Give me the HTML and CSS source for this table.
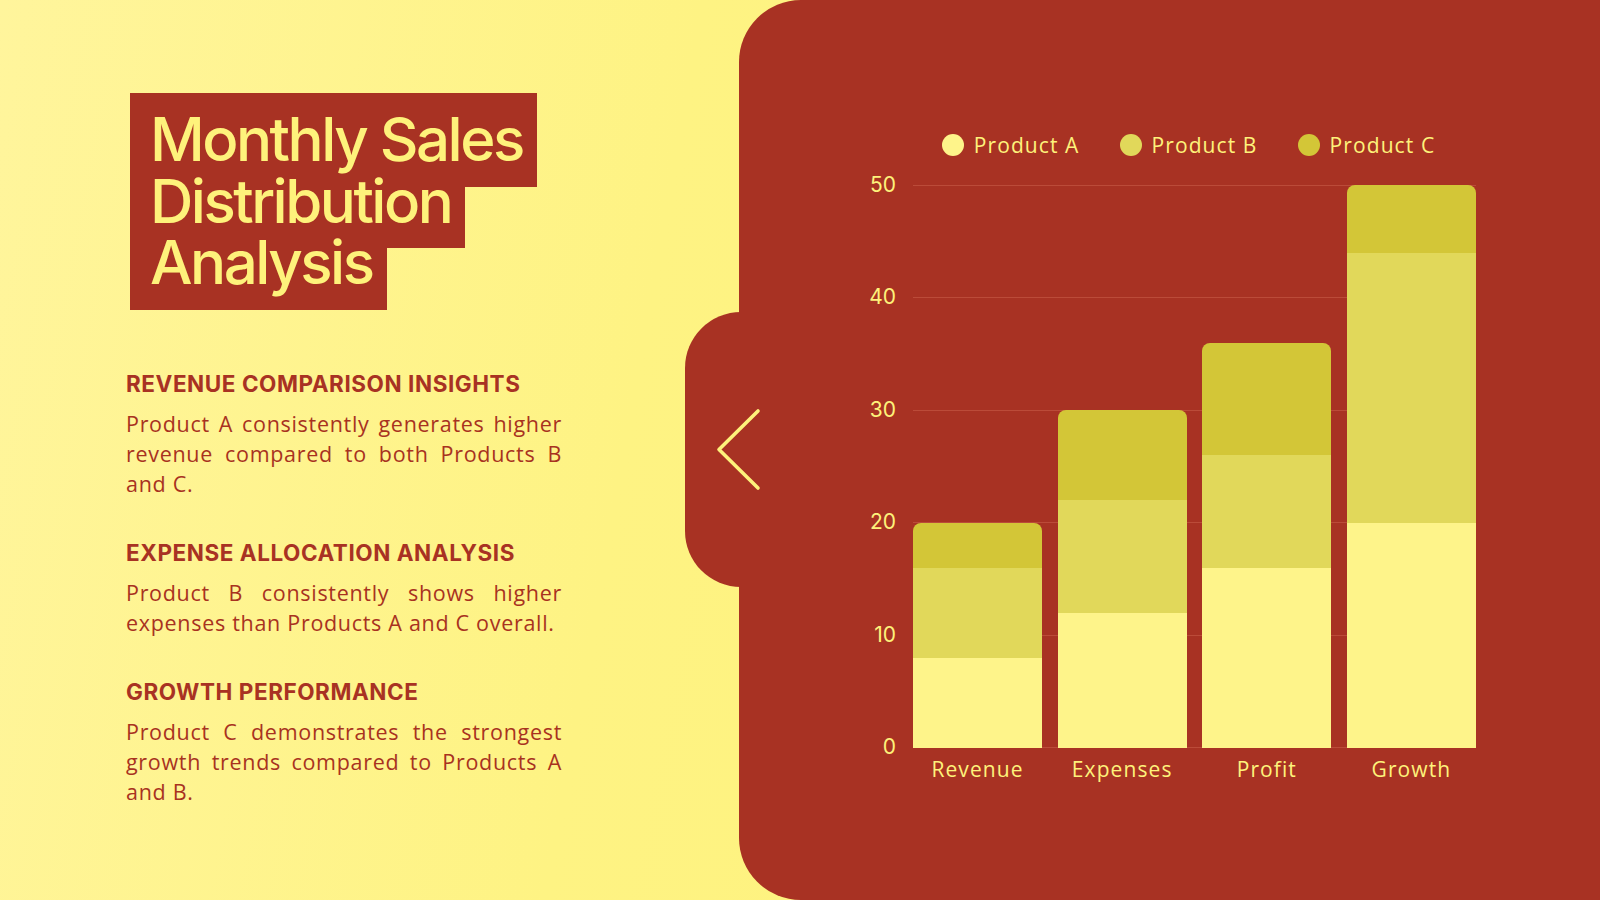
FILE: index.html
```html
<!DOCTYPE html>
<html lang="en">
<head>
<meta charset="utf-8">
<title>Monthly Sales Distribution Analysis</title>
<link rel="stylesheet" href="styles.css">
</head>
<body>
<main class="slide">
  <section class="info">
    <h1 class="title">
      <span class="tline t1">Monthly Sales</span>
      <span class="tline t2">Distribution</span>
      <span class="tline t3">Analysis</span>
    </h1>
    <div class="insights">
      <article class="insight">
        <h2>REVENUE COMPARISON INSIGHTS</h2>
        <p><span class="ln">Product A consistently generates higher</span><span class="ln">revenue compared to both Products B</span><span class="ln last">and C.</span></p>
      </article>
      <article class="insight">
        <h2>EXPENSE ALLOCATION ANALYSIS</h2>
        <p><span class="ln">Product B consistently shows higher</span><span class="ln last">expenses than Products A and C overall.</span></p>
      </article>
      <article class="insight">
        <h2>GROWTH PERFORMANCE</h2>
        <p><span class="ln">Product C demonstrates the strongest</span><span class="ln">growth trends compared to Products A</span><span class="ln last">and B.</span></p>
      </article>
    </div>
  </section>

  <section class="panel">
    <div class="tab">
      <svg class="chev" viewBox="0 0 45 83" width="45" height="83" aria-hidden="true">
        <polyline points="42,3 3,41.5 42,80" fill="none" stroke="#fef27b" stroke-width="3.6" stroke-linecap="round" stroke-linejoin="round"/>
      </svg>
    </div>

    <div class="chart">
      <ul class="legend">
        <li><i class="dot a"></i>Product A</li>
        <li><i class="dot b"></i>Product B</li>
        <li><i class="dot c"></i>Product C</li>
      </ul>
      <div class="yaxis">
        <span>50</span><span>40</span><span>30</span><span>20</span><span>10</span><span>0</span>
      </div>
      <div class="plot">
        <div class="grid"><i></i><i></i><i></i><i></i><i></i><i></i></div>
        <div class="bars">
          <div class="bar" style="height:40%"><div class="seg a" style="flex-grow:8"></div><div class="seg b" style="flex-grow:8"></div><div class="seg c" style="flex-grow:4"></div></div>
          <div class="bar" style="height:60%"><div class="seg a" style="flex-grow:12"></div><div class="seg b" style="flex-grow:10"></div><div class="seg c" style="flex-grow:8"></div></div>
          <div class="bar" style="height:72%"><div class="seg a" style="flex-grow:16"></div><div class="seg b" style="flex-grow:10"></div><div class="seg c" style="flex-grow:10"></div></div>
          <div class="bar" style="height:100%"><div class="seg a" style="flex-grow:20"></div><div class="seg b" style="flex-grow:24"></div><div class="seg c" style="flex-grow:6"></div></div>
        </div>
      </div>
      <div class="cats">
        <span>Revenue</span><span>Expenses</span><span>Profit</span><span>Growth</span>
      </div>
    </div>
  </section>
</main>
</body>
</html>
```

FILE: styles.css
```css
* { box-sizing: border-box; }

html, body {
  margin: 0;
  padding: 0;
  width: 1600px;
  height: 900px;
  overflow: hidden;
}

body {
  font-family: "Open Sans", "Liberation Sans", sans-serif;
  background: #fef27b;
}

.slide {
  width: 1600px;
  height: 900px;
  display: flex;
  background: linear-gradient(100deg, #fff59c 0%, #fef383 40%, #fef176 100%);
}

/* ---------- left column ---------- */
.info {
  flex: 0 0 739px;
  padding: 93px 0 0 126px;
}

.title {
  margin: 0 0 0 4px;
  font-family: "Inter", "Liberation Sans", sans-serif;
  font-weight: 500;
  font-size: 60px;
  letter-spacing: -2.5px;
  color: #fef27b;
}

.tline {
  display: block;
  width: fit-content;
  background: #a83223;
  line-height: 28px;
  padding: 0 14px 33px 20px;
  white-space: nowrap;
}

.t1 { padding-top: 32px; padding-bottom: 34px; }
.t3 { padding-bottom: 34px; }

.insights {
  margin-top: 59px;
  width: 436px;
  display: flex;
  flex-direction: column;
  gap: 39.5px;
}

.insight h2 {
  margin: 0;
  font-family: "Inter", "Liberation Sans", sans-serif;
  font-weight: 700;
  font-size: 22.5px;
  line-height: 30px;
  letter-spacing: 0.55px;
  color: #a83223;
}

.insight p {
  margin: 9.5px 0 0;
  font-size: 21.5px;
  line-height: 30px;
  letter-spacing: 0.7px;
  color: #a8321f;
}

.ln {
  display: block;
  text-align: justify;
  text-align-last: justify;
  white-space: nowrap;
}

.ln.last {
  text-align: left;
  text-align-last: left;
}

/* ---------- right panel ---------- */
.panel {
  flex: 1;
  position: relative;
  background: #a83223;
  border-radius: 62px 0 0 62px;
  padding: 130px 0 0 117px;
}

.tab {
  position: absolute;
  left: -54px;
  top: 312px;
  width: 100px;
  height: 275px;
  background: #a83223;
  border-radius: 56px 0 0 56px;
  display: flex;
  align-items: center;
  padding-left: 31px;
}

.chev { display: block; }

.chart {
  display: grid;
  grid-template-columns: 40px 563px;
  grid-template-rows: 55px 563px auto;
  column-gap: 17px;
  row-gap: 0;
}

.legend {
  grid-column: 2;
  grid-row: 1;
  align-self: start;
  list-style: none;
  margin: 0 0 0 -12px;
  padding: 0;
  display: flex;
  justify-content: center;
  align-items: center;
  gap: 40px;
  color: #fef27b;
  font-size: 21px;
  letter-spacing: 1.1px;
  line-height: 30px;
}

.legend li {
  display: flex;
  align-items: center;
  gap: 10px;
}

.dot {
  display: block;
  width: 22px;
  height: 22px;
  border-radius: 50%;
}

.a { background: #fef48a; }
.b { background: #e1d85a; }
.c { background: #d3c637; }

.yaxis {
  grid-column: 1;
  grid-row: 2;
  display: flex;
  flex-direction: column;
  justify-content: space-between;
  font-family: "Inter", "Liberation Sans", sans-serif;
  font-size: 21px;
  color: #fef27b;
}

.yaxis span {
  display: block;
  height: 1px;
  line-height: 0;
  text-align: right;
}

.plot {
  grid-column: 2;
  grid-row: 2;
  display: grid;
}

.grid,
.bars {
  grid-area: 1 / 1;
}

.grid {
  display: flex;
  flex-direction: column;
  justify-content: space-between;
}

.grid i {
  display: block;
  height: 1px;
  background: #bb4b39;
}

.bars {
  display: grid;
  grid-template-columns: repeat(4, 1fr);
  column-gap: 15.5px;
  align-items: end;
  height: 563px;
}

.bar {
  display: flex;
  flex-direction: column-reverse;
  border-radius: 8px 8px 0 0;
  overflow: hidden;
}

.seg {
  flex-basis: 0;
  min-height: 0;
}

.cats {
  grid-column: 2;
  grid-row: 3;
  margin-top: 8px;
  display: grid;
  grid-template-columns: repeat(4, 1fr);
  column-gap: 15.5px;
  text-align: center;
  font-size: 21px;
  letter-spacing: 1.1px;
  line-height: 26px;
  color: #fef27b;
}
```
